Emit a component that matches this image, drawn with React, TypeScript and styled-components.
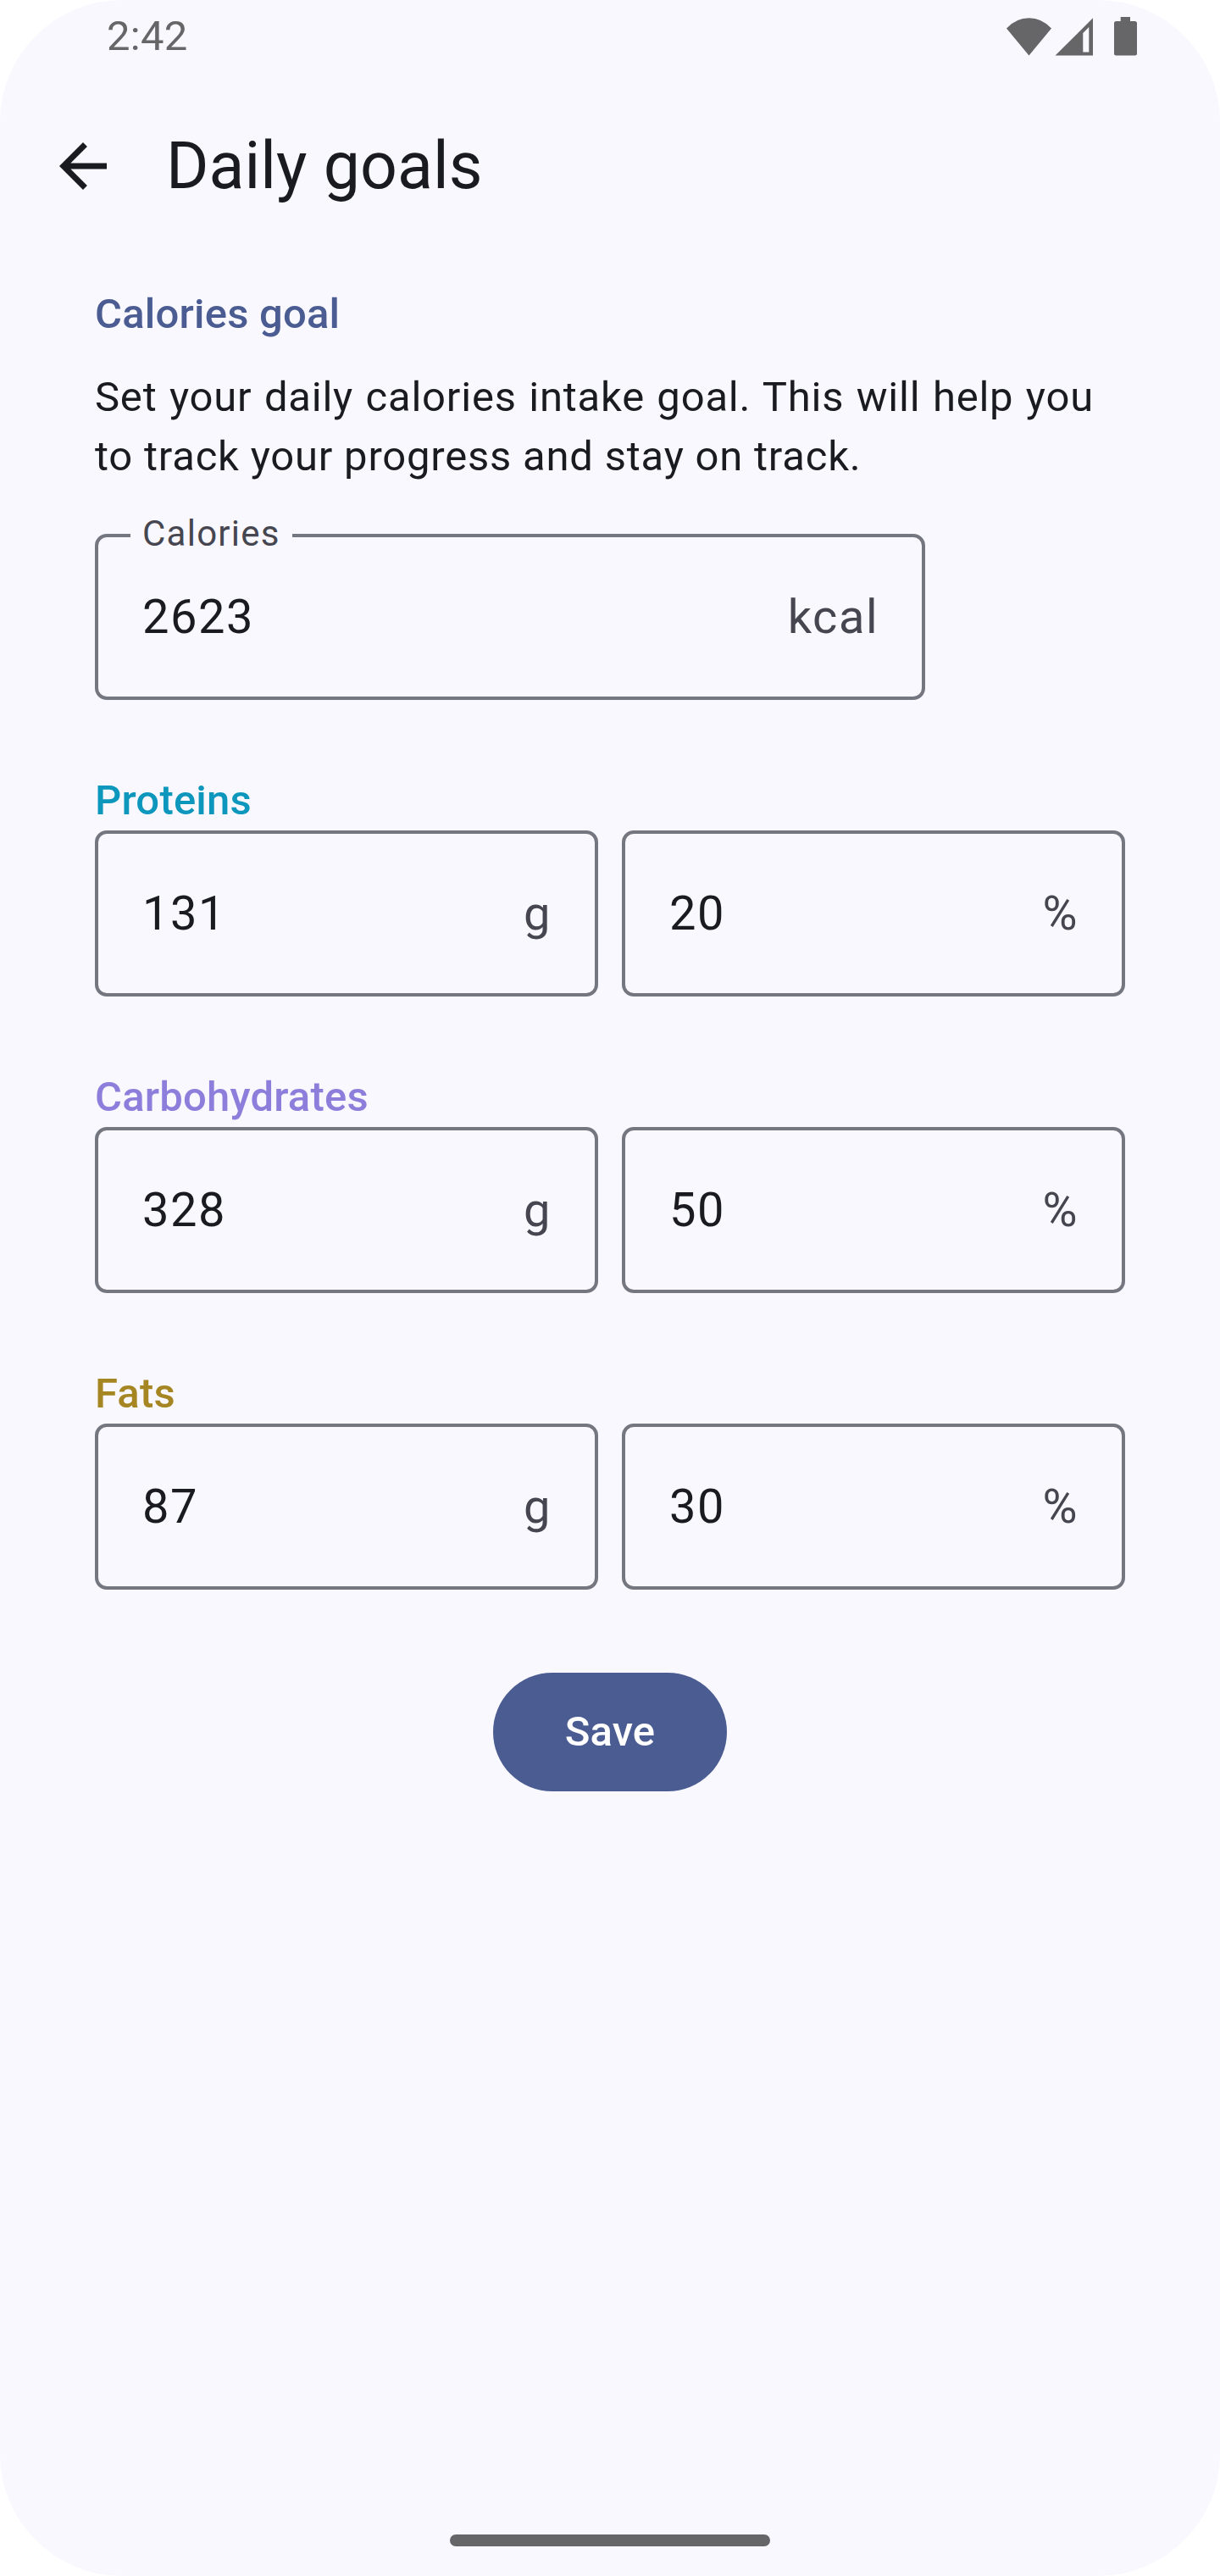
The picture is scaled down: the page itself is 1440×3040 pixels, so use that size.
import React from "react";
import styled, { createGlobalStyle } from "styled-components";

const color = {
  surface: "#faf8ff",
  onSurface: "#1a1b21",
  onSurfaceVariant: "#45464f",
  outline: "#757780",
  primary: "#4a5c92",
  onPrimary: "#ffffff",
  system: "#666668",
  proteins: "#0d97bc",
  carbs: "#8e7edb",
  fats: "#a58623",
};

const GlobalStyle = createGlobalStyle`
  *, *::before, *::after { box-sizing: border-box; }
  body { margin: 0; background: #fff; }
`;

const Screen = styled.div`
  display: flex;
  flex-direction: column;
  width: 1440px;
  height: 3040px;
  border-radius: 144px;
  overflow: hidden;
  background: ${color.surface};
  color: ${color.onSurface};
  font-family: Roboto, "Noto Sans", sans-serif;
  font-size: 49px;
  line-height: 70px;
`;

const StatusBar = styled.div`
  display: flex;
  align-items: center;
  justify-content: space-between;
  height: 86px;
  padding: 0 97px 0 126px;
  color: ${color.system};
  letter-spacing: 0.3px;
`;

const StatusIcons = styled.svg`
  display: block;
  width: 156px;
  height: 46px;
`;

const AppBar = styled.header`
  display: flex;
  align-items: center;
  gap: 56px;
  height: 220px;
  padding-left: 56px;
`;

const BackButton = styled.button`
  display: flex;
  padding: 0;
  border: 0;
  background: none;
  color: inherit;

  svg {
    width: 84px;
    height: 84px;
    fill: currentColor;
  }
`;

const Title = styled.h1`
  margin: 0;
  font-size: 77px;
  font-weight: 400;
  letter-spacing: 0.05px;
  line-height: 98px;
`;

const Content = styled.main`
  display: flex;
  flex: 1;
  flex-direction: column;
  padding: 30px 112px 0;
`;

const SectionTitle = styled.h2<{ $color: string }>`
  margin: 0;
  color: ${(p) => p.$color};
  font-size: 49px;
  font-weight: 500;
  letter-spacing: 0.2px;
  line-height: 70px;
`;

const Description = styled.p`
  width: 1179px;
  margin: 28px 0 56px;
  letter-spacing: 0.78px;
  text-align: justify;
`;

const Field = styled.div<{ $width: number }>`
  position: relative;
  display: flex;
  align-items: center;
  justify-content: space-between;
  width: ${(p) => p.$width}px;
  height: 196px;
  padding: 0 51px 0 52px;
  border: 4px solid ${color.outline};
  border-radius: 14px;
  font-size: 56px;
  letter-spacing: 1.5px;
  line-height: 84px;
`;

const FloatingLabel = styled.span`
  position: absolute;
  top: -32px;
  left: 38px;
  padding: 0 14px;
  background: ${color.surface};
  color: ${color.onSurfaceVariant};
  font-size: 42px;
  letter-spacing: 1.25px;
  line-height: 56px;
`;

const Unit = styled.span`
  color: ${color.onSurfaceVariant};
`;

const Macro = styled.section`
  margin-top: 84px;
`;

const FieldRow = styled.div`
  display: flex;
  gap: 28px;
`;

const SaveButton = styled.button`
  align-self: center;
  width: 276px;
  height: 140px;
  margin-top: 98px;
  padding: 0;
  border: 0;
  border-radius: 70px;
  background: ${color.primary};
  color: ${color.onPrimary};
  font: 500 49px/70px Roboto, "Noto Sans", sans-serif;
  letter-spacing: 0.1px;
`;

const HomeIndicator = styled.div`
  align-self: center;
  width: 378px;
  height: 14px;
  margin-bottom: 35px;
  border-radius: 7px;
  background: ${color.system};
`;

const macros = [
  { name: "Proteins", tint: color.proteins, grams: 131, percent: 20 },
  { name: "Carbohydrates", tint: color.carbs, grams: 328, percent: 50 },
  { name: "Fats", tint: color.fats, grams: 87, percent: 30 },
];

interface UnitFieldProps {
  value: number;
  unit: string;
  width: number;
  label?: string;
}

function UnitField({ value, unit, width, label }: UnitFieldProps) {
  return (
    <Field $width={width}>
      {label && <FloatingLabel>{label}</FloatingLabel>}
      <span>{value}</span>
      <Unit>{unit}</Unit>
    </Field>
  );
}

export default function App() {
  return (
    <>
      <GlobalStyle />
      <Screen>
        <StatusBar>
          <span>2:42</span>
          <StatusIcons viewBox="1187 20 156 46" fill="currentColor">
            <path d="M1214.5 65.5 1188 33.4Q1199.5 21.3 1214.5 21.3T1241 33.4Z" />
            <path
              fillRule="evenodd"
              d="M1245.5 65.5H1290V21.3ZM1278.3 39 1285.3 32V61.5H1278.3Z"
            />
            <path d="M1322.7 20H1334V25H1339.5Q1342 25 1342 27.5V63Q1342 65.5 1339.5 65.5H1317.5Q1315 65.5 1315 63V27.5Q1315 25 1317.5 25H1322.7Z" />
          </StatusIcons>
        </StatusBar>
        <AppBar>
          <BackButton aria-label="Back">
            <svg viewBox="0 0 24 24">
              <path d="M20 11H7.83l5.59-5.59L12 4l-8 8 8 8 1.41-1.41L7.83 13H20z" />
            </svg>
          </BackButton>
          <Title>Daily goals</Title>
        </AppBar>
        <Content>
          <SectionTitle $color={color.primary}>Calories goal</SectionTitle>
          <Description>
            Set your daily calories intake goal. This will help you to track
            your progress and stay on track.
          </Description>
          <UnitField label="Calories" value={2623} unit="kcal" width={980} />
          {macros.map((m) => (
            <Macro key={m.name}>
              <SectionTitle $color={m.tint}>{m.name}</SectionTitle>
              <FieldRow>
                <UnitField value={m.grams} unit="g" width={594} />
                <UnitField value={m.percent} unit="%" width={594} />
              </FieldRow>
            </Macro>
          ))}
          <SaveButton>Save</SaveButton>
        </Content>
        <HomeIndicator />
      </Screen>
    </>
  );
}
